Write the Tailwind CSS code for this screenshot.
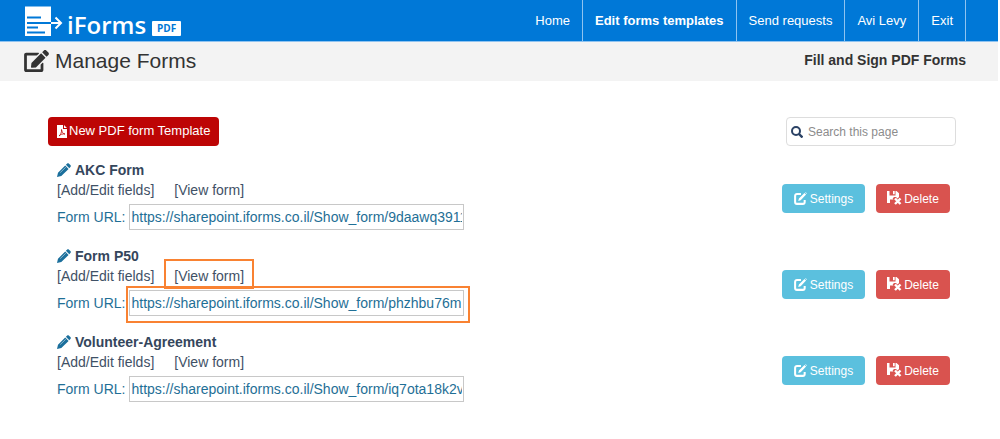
<!DOCTYPE html>
<html lang="en">
<head>
<meta charset="utf-8">
<meta name="viewport" content="width=device-width, initial-scale=1">
<title>iForms PDF - Manage Forms</title>
<script src="https://cdn.jsdelivr.net/npm/@tailwindcss/browser@4"></script>
</head>
<body class="bg-white font-['Liberation_Sans',Arial,sans-serif] text-sm text-[#3f5166]">
<svg class="hidden" aria-hidden="true">
  <symbol id="edit" viewBox="0 0 576 512"><path fill="currentColor" d="M402.600 83.200l90.200 90.200c3.800 3.800 3.800 10 0 13.800L274.400 405.600l-92.800 10.300c-12.400 1.400-22.900-9.100-21.500-21.500l10.300-92.800L388.800 83.200c3.800-3.800 10-3.800 13.800 0zm162-22.900l-48.800-48.800c-15.200-15.200-39.900-15.200-55.200 0l-35.400 35.400c-3.800 3.800-3.800 10 0 13.800l90.200 90.200c3.800 3.800 10 3.800 13.800 0l35.400-35.400c15.200-15.300 15.200-40 0-55.200zM384 346.200V448H64V128h229.800c3.200 0 6.200-1.300 8.500-3.500l40-40c7.600-7.600 2.200-20.500-8.500-20.500H48C21.500 64 0 85.500 0 112v352c0 26.500 21.500 48 48 48h352c26.500 0 48-21.500 48-48V306.200c0-10.700-12.900-16-20.500-8.500l-40 40c-2.200 2.300-3.500 5.300-3.500 8.500z"/></symbol>
  <symbol id="pencil" viewBox="0 0 14 14"><path fill="currentColor" d="M10 .7c.6-.6 1.400-.6 2 0l1.400 1.400c.6.600.6 1.400 0 2l-1.100 1.100-3.400-3.400zM8.200 2.500l3.400 3.400-7.300 7.100L0 14l1-4.300z"/><path stroke="#fff" stroke-width=".7" d="M3.200 9.600 8.800 4.200" opacity=".7"/></symbol>
  <symbol id="settings" viewBox="0 0 14 14"><path fill="none" stroke="currentColor" stroke-width="2.200" d="M7.500 2.200H3.200a2 2 0 0 0-2 2v6.600a2 2 0 0 0 2 2h6.300a2 2 0 0 0 2-2V8.500"/><path fill="currentColor" d="M11.300 1 13 2.700 7.200 8.900 4.600 9.600 5.300 7zM12 .4l.4-.4L14 1.500l-.4.6z"/></symbol>
  <symbol id="remove" viewBox="0 0 15 14"><path fill="currentColor" d="M0 0h2.500v4.500h6V0h1L12 2.300V6L10.500 7.400 9 6H7L5.600 7.400 6.500 8.500H3V12H0z"/><path fill="currentColor" d="M6 0h1.700v3.300H6z"/><path stroke="currentColor" stroke-width="2.400" d="m8 7.500 5.500 5.500m0-5.500L8 13"/></symbol>
</svg>

<header class="mr-0.5 flex h-[42px] border-b border-[#8fc3f0] bg-[#0078d7] text-white">
  <a href="#" aria-label="iForms PDF" class="ml-6 flex items-start">
    <svg class="mt-1.5 h-[31px] w-[39px]" viewBox="0 0 39 31" fill="none"><path fill="#fff" d="M1 .5h26v29.500H1z"/><path stroke="#0078d7" stroke-width="2" d="M3 11.500h14M3 17h24M3 21.500h11M3 26.500h18"/><path stroke="#fff" stroke-width="2" d="M27 17h10M31.500 11.500l5.500 5.500-5.500 5.500"/></svg>
    <span class="ml-1 mt-2 font-['Open_Sans',sans-serif] text-2xl leading-[34px] font-semibold">iForms</span>
    <span class="mt-[21px] ml-1.5 h-[15px] rounded-[1px] bg-white px-[5px] font-['Open_Sans',sans-serif] text-[10px] leading-[15px] font-bold text-[#0078d7]">PDF</span>
  </a>
  <nav class="mr-8 ml-auto flex text-[13px] leading-[41px] whitespace-nowrap">
    <a href="#" class="border-r border-[#8fc3f0] px-3">Home</a>
    <a href="#" class="border-r border-[#8fc3f0] px-3 font-bold" aria-current="page">Edit forms templates</a>
    <a href="#" class="border-r border-[#8fc3f0] px-3">Send requests</a>
    <a href="#" class="border-r border-[#8fc3f0] px-3">Avi Levy</a>
    <a href="#" class="border-r border-[#8fc3f0] px-3">Exit</a>
  </nav>
</header>
<div class="mr-0.5 flex h-[39px] justify-between bg-[#f3f3f3] pr-8 pl-6 text-[#333]">
  <h1 class="flex h-[38px] items-center gap-1.5 text-[21px]"><svg class="h-[22px] w-[25px]"><use href="#edit"/></svg>Manage Forms</h1>
  <p class="text-sm leading-9 font-bold">Fill and Sign PDF Forms</p>
</div>

<main class="pt-9 pr-11 pl-12">
  <div class="flex justify-between">
    <button type="button" class="flex h-[29px] items-center gap-[2px] rounded bg-[#bd0505] px-[9px] text-[13px] text-white">
      <svg class="h-[13px] w-2.5" viewBox="0 0 10 13"><path fill="#fff" d="M0 0h6v4h4v9H0zM7 0l3 3H7z"/><path fill="none" stroke="#bd0505" stroke-width=".8" d="M2 11c1.500-1 3-4 2.500-6.500C5 7 6 9 8 9 5.500 8.500 3.500 9.500 2 11z"/></svg>
      New PDF form Template
    </button>
    <label class="flex h-[29px] w-[170px] items-center gap-[5px] rounded border border-[#ddd] px-1">
      <svg class="size-3 shrink-0 text-[#2b4265]" viewBox="0 0 12 12" fill="none" stroke="currentColor" stroke-width="2"><circle cx="5" cy="5" r="4"/><path stroke-width="2.400" d="m8 8 3.500 3.500"/></svg>
      <input type="search" aria-label="Search this page" placeholder="Search this page" class="w-full min-w-0 text-xs outline-none placeholder:text-[#8c8c8c]">
    </label>
  </div>

  <ul class="mt-3.5 flex flex-col gap-4 pl-[9px]">
    <li class="flex justify-between">
      <div>
        <h2 class="flex h-5 items-center gap-1 font-bold text-[#34465c]"><svg class="size-3.5 text-[#1b6f9c]"><use href="#pencil"/></svg>AKC Form</h2>
        <div class="flex h-5 items-center gap-5"><a href="#">[Add/Edit fields]</a><a href="#">[View form]</a></div>
        <div class="mt-1 flex h-[26px] items-center gap-1 text-[#1f6f96]"><label for="u1">Form URL:</label><input id="u1" class="h-[26px] w-[335px] border border-[#c8c8c8] px-px" value="https://sharepoint.iforms.co.il/Show_form/9daawq3911b"></div>
      </div>
      <div class="mr-1.5 flex gap-[11px] pt-6 text-xs text-white">
        <button type="button" class="flex h-[29px] w-[83px] items-center justify-center gap-[3px] rounded bg-[#5bc0de]"><svg class="size-[13px]"><use href="#settings"/></svg>Settings</button>
        <button type="button" class="flex h-[29px] w-[74px] items-center justify-center gap-[2px] rounded bg-[#d9534f]"><svg class="mb-0.5 h-3.5 w-[15px]"><use href="#remove"/></svg>Delete</button>
      </div>
    </li>
    <li class="flex justify-between">
      <div>
        <h2 class="flex h-5 items-center gap-1 font-bold text-[#34465c]"><svg class="size-3.5 text-[#1b6f9c]"><use href="#pencil"/></svg>Form P50</h2>
        <div class="flex h-5 items-center gap-5"><a href="#">[Add/Edit fields]</a><a href="#" class="relative">[View form]<span class="absolute -inset-x-2.5 -top-[7px] h-[30px] border-2 border-[#f98232]"></span></a></div>
        <div class="mt-1 flex h-[26px] items-center gap-1 text-[#1f6f96]"><label for="u2">Form URL:</label><span class="relative"><input id="u2" class="block h-[26px] w-[335px] border border-[#c8c8c8] px-px" value="https://sharepoint.iforms.co.il/Show_form/phzhbu76m"><span class="pointer-events-none absolute -top-1 -right-1.5 -bottom-[7px] -left-[3px] border-2 border-[#f98232]"></span></span></div>
      </div>
      <div class="mr-1.5 flex gap-[11px] pt-6 text-xs text-white">
        <button type="button" class="flex h-[29px] w-[83px] items-center justify-center gap-[3px] rounded bg-[#5bc0de]"><svg class="size-[13px]"><use href="#settings"/></svg>Settings</button>
        <button type="button" class="flex h-[29px] w-[74px] items-center justify-center gap-[2px] rounded bg-[#d9534f]"><svg class="mb-0.5 h-3.5 w-[15px]"><use href="#remove"/></svg>Delete</button>
      </div>
    </li>
    <li class="flex justify-between">
      <div>
        <h2 class="flex h-5 items-center gap-1 font-bold text-[#34465c]"><svg class="size-3.5 text-[#1b6f9c]"><use href="#pencil"/></svg>Volunteer-Agreement</h2>
        <div class="flex h-5 items-center gap-5"><a href="#">[Add/Edit fields]</a><a href="#">[View form]</a></div>
        <div class="mt-1 flex h-[26px] items-center gap-1 text-[#1f6f96]"><label for="u3">Form URL:</label><input id="u3" class="h-[26px] w-[335px] border border-[#c8c8c8] px-px" value="https://sharepoint.iforms.co.il/Show_form/iq7ota18k2v"></div>
      </div>
      <div class="mr-1.5 flex gap-[11px] pt-6 text-xs text-white">
        <button type="button" class="flex h-[29px] w-[83px] items-center justify-center gap-[3px] rounded bg-[#5bc0de]"><svg class="size-[13px]"><use href="#settings"/></svg>Settings</button>
        <button type="button" class="flex h-[29px] w-[74px] items-center justify-center gap-[2px] rounded bg-[#d9534f]"><svg class="mb-0.5 h-3.5 w-[15px]"><use href="#remove"/></svg>Delete</button>
      </div>
    </li>
  </ul>
</main>
</body>
</html>
